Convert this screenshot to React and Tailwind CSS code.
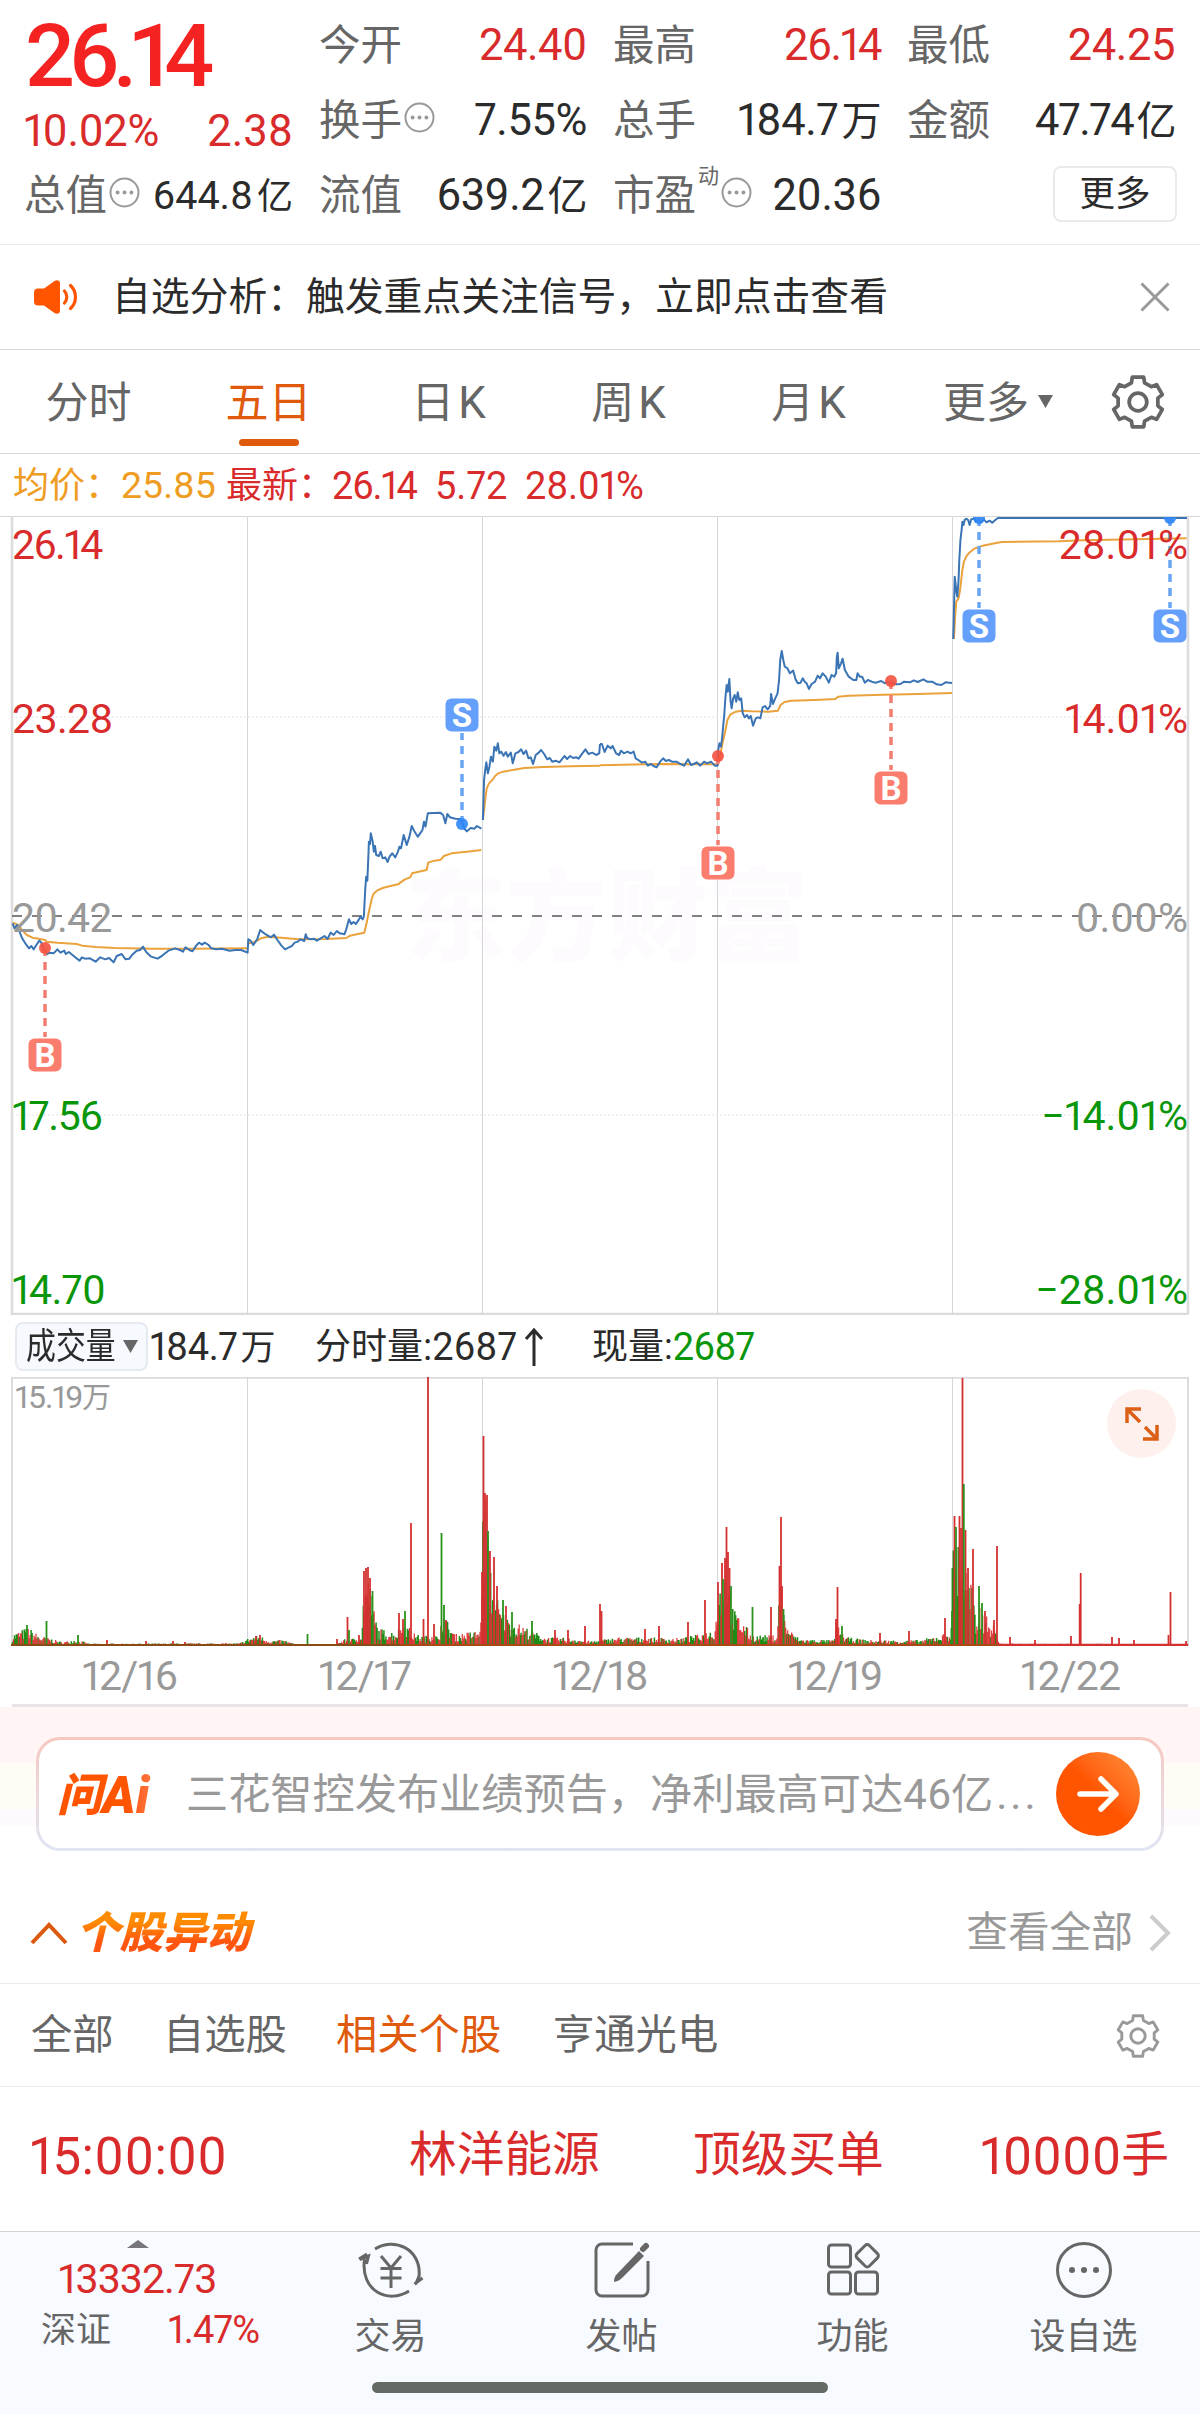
import React from 'react';

const RED = '#d92b2b';
const GREEN = '#0a960a';

// price series, in chart units (1 unit = 1/2.6133 px across, 1/3 px down)
const PRICE_LEFT = [
  '33,910 38,925 45,915 52,938 58,955 66,970 76,985 82,978 88,988 95,975 103,962 108,968 115,990 122,1003 130,998 140,1000 150,988 158,998 168,992 172,1002 180,996 195,1010 208,1022 214,1012 222,1016 235,1015 250,1025 262,1012 275,1018 285,1014 297,1027 305,1008 318,1002 328,1018 338,1016 345,1005 357,992 366,990 374,980 382,996 395,1010 412,1016 425,1006 440,992 458,985 470,990 478,995 485,982 495,990 503,994 512,978 520,968 528,974 535,968 545,975 552,985 565,988 580,986 600,992 615,990 630,990 647,998 649,958 655,962 662,975 672,958 680,930 688,938 697,945 708,952 716,944 725,960 735,976 745,988 755,982 763,978 770,968 778,965 785,958 795,963 799,943 803,955 812,958 820,956 828,962 838,955 848,948 856,957 864,938 872,945 880,933 888,940 900,943 905,928 912,898 918,912 924,906 930,912 936,902 942,890 948,898 951,888 953,840 955,800 957,770 960,782 963,700 964,665 967,672 969,640 974,665 977,695 980,678 983,705 990,708 995,695 1000,715 1007,712 1013,726 1018,710 1025,700 1033,712 1040,695 1044,680 1048,685 1055,645 1063,675 1070,650 1076,618 1082,632 1092,650 1098,640 1104,630 1108,605 1112,620 1118,580 1150,578 1158,585 1164,610 1169,582 1176,592 1190,596 1202,597 1208,608 1213,625 1220,634 1230,624 1240,626 1246,618 1258,626',
  '1262,600 1263,560 1265,480 1268,450 1271,427 1275,460 1279,440 1283,410 1288,425 1292,380 1297,392 1301,370 1305,400 1310,395 1316,407 1322,396 1327,410 1335,398 1340,430 1347,400 1355,396 1362,388 1368,402 1375,392 1381,415 1387,412 1393,432 1400,405 1408,398 1414,390 1422,402 1430,418 1437,414 1443,425 1452,422 1462,427 1475,408 1482,417 1490,408 1498,414 1506,412 1512,416 1520,403 1530,388 1538,402 1548,398 1558,405 1566,400 1568,372',
];
const PRICE_RIGHT = [
  '0,732 5,732 12,756 20,737 28,745 33,738 42,760 50,765 55,752 62,760 72,755 80,760 88,755 93,775 100,780 110,788 118,785 125,797 133,792 140,798 148,802 157,785 165,775 172,783 180,780 188,785 200,785 210,792 220,797 230,778 238,795 245,792 253,787 262,797 272,785 280,790 290,785 300,797 307,797 309,750 312,730 316,740 319,715 321,690 325,640 328,590 331,555 334,575 338,537 341,600 344,625 348,595 352,585 356,605 360,577 364,600 369,595 373,640 378,652 384,645 389,655 394,648 400,677 407,655 413,652 419,655 425,622 431,618 438,628 445,618 447,582 452,612 458,595 464,580 468,540 471,480 475,453 479,480 483,500 490,505 496,520 505,512 511,538 517,550 524,548 530,535 535,545 540,550 546,567 553,552 562,545 569,527 575,535 582,520 590,530 598,548 605,525 612,530 617,520 619,470 621,458 624,505 630,490 634,476 640,510 650,530 662,540 670,540 673,520 679,530 685,530 692,548 700,540 710,545 720,548 735,543 745,550 760,545 775,553 785,552 795,545 810,547 820,541 830,546 845,538 855,545 868,545 880,553 892,555 903,547 920,549',
  '923,417 924,380 925,330 927,230 929,250 932,280 934,290 937,240 939,180 942,120 945,90 947,65 950,75 953,60 957,56 962,60 966,75 970,58 978,55 983,65 990,58 995,68 1003,58 1010,67 1018,62 1025,68 1033,60 1040,54 1533,54',
];
const AVG_LEFT = [
  '33,908 48,915 58,930 70,945 85,953 105,957 118,960 122,965 150,968 200,972 215,977 250,981 300,984 400,986 500,986 647,985',
  '647,970 660,968 672,962 682,955 700,950 735,953 780,958 850,957 905,954 915,947 935,942 952,938 958,910 965,870 972,835 976,822 985,812 1000,804 1020,798 1040,793 1058,778 1072,772 1077,760 1100,754 1115,750 1119,728 1135,722 1152,719 1160,708 1180,700 1220,695 1258,690',
  '1262,600 1265,570 1269,530 1272,505 1278,490 1288,478 1294,468 1302,460 1315,455 1340,450 1370,444 1420,441 1490,439 1568,437',
];
const AVG_RIGHT = [
  '0,796 60,794 150,792 305,793',
  '307,797 315,760 322,720 328,690 333,660 341,643 355,635 370,632 395,634 440,635 465,632 472,615 482,606 500,602 560,600 615,597 622,590 650,587 740,584 830,582 920,579',
  '925,417 928,350 931,305 937,295 941,270 944,240 947,210 951,185 958,168 965,158 978,146 1000,137 1035,129 1050,126 1200,124 1260,121 1400,118 1533,115',
];

const MARKERS = [
  { kind: 'B', x: 45, dot: 948, box: 1055 },
  { kind: 'S', x: 462, dot: 824, box: 715 },
  { kind: 'B', x: 718, dot: 756, box: 863 },
  { kind: 'B', x: 891, dot: 681, box: 788 },
  { kind: 'S', x: 979, dot: 518, box: 626 },
  { kind: 'S', x: 1170, dot: 518, box: 626 },
];

// volume: rough level along the x axis, then single minutes that stick out
const LEVEL = [
  [12, 12], [28, 19], [40, 10], [50, 8], [62, 4], [75, 7], [90, 2.5], [240, 3], [248, 8], [258, 11], [270, 6], [285, 6],
  [295, 2], [335, 2], [345, 7], [355, 8], [362, 12], [364, 70], [370, 70], [374, 38], [378, 18], [395, 14], [405, 24],
  [415, 12], [425, 10], [434, 14], [440, 6], [441, 42], [447, 26], [455, 12], [480, 16], [482, 100], [484, 170], [487, 150],
  [489, 90], [495, 60], [500, 38], [508, 28], [530, 17], [545, 9], [575, 8], [590, 5], [620, 9], [680, 8], [700, 12],
  [715, 18], [718, 55], [726, 85], [730, 62], [733, 38], [745, 22], [752, 11], [777, 11], [779, 70], [782, 62], [785, 26],
  [792, 14], [800, 7], [834, 6], [836, 25], [840, 16], [846, 9], [870, 6], [920, 6], [940, 11], [951, 15], [953, 115],
  [962, 118], [966, 80], [973, 60], [976, 14], [979, 44], [985, 32], [996, 18], [999, 2.5], [1188, 2],
];
const SPIKES = {
  r: [
    [107, 6], [146, 5], [173, 5], [185, 4], [256, 10], [260, 11], [337, 7], [347.5, 29], [359, 11], [364, 75], [366, 78],
    [368, 79], [370, 68], [399, 33], [403, 27], [411, 123], [423.5, 27], [428, 269], [434, 22], [446, 26], [482, 74],
    [483.5, 210], [485, 153], [487, 151], [490, 95], [494, 89], [497, 60], [506, 40], [555, 16], [568, 16], [585, 20],
    [600, 42], [601.5, 35], [645, 17], [659, 20], [688, 24], [705, 46], [718, 64], [722, 83], [725, 88], [726.5, 119],
    [728, 94], [729.5, 78], [771, 39], [779.5, 80], [781, 129], [782, 60], [836, 27], [837.5, 59], [880, 13], [909, 15],
    [945, 28], [954.5, 130], [959.5, 130], [961, 118], [962.5, 268], [965.5, 116], [968, 78], [973, 97], [985, 35],
    [994, 26], [997, 100], [1010, 9], [1035, 6], [1071, 10], [1079.7, 42], [1080.7, 73], [1112, 9], [1119, 8], [1134, 6],
    [1168.5, 11], [1170.5, 54], [1186, 5],
  ],
  g: [
    [27, 21], [46.5, 25], [78, 11], [307.5, 12], [349, 16], [372.5, 55], [405, 35], [441.5, 113], [444, 41], [488, 115],
    [503, 46], [512, 34], [532, 25], [723, 67], [731, 60], [752.5, 39], [783.5, 37], [842, 20], [952, 35], [956, 119],
    [963.8, 162], [979, 60], [982, 43],
  ],
};

function levelAt(x) {
  const i = LEVEL.findIndex(([px]) => px >= x);
  if (i <= 0) return LEVEL[0][1];
  const [x0, h0] = LEVEL[i - 1];
  const [x1, h1] = LEVEL[i];
  return h0 + ((h1 - h0) * (x - x0)) / (x1 - x0);
}

function volumePaths() {
  let seed = 7;
  const rand = () => {
    seed = (seed * 16807) % 2147483647;
    return seed / 2147483647;
  };
  const out = { r: '', g: '' };
  for (let x = 12.5; x < 1188; x += 0.98) {
    const h = Math.max(1.5, levelAt(x) * (0.35 + 0.65 * rand()));
    const key = x > 998 || rand() < 0.52 ? 'r' : 'g';
    out[key] += `M${x.toFixed(1)} 269v-${h.toFixed(1)}`;
  }
  return out;
}
const VOLUME = volumePaths();

function gearPath(c, outer, inner) {
  const pts = [];
  for (let i = 0; i < 6; i++) {
    const a = i * 60 - 90;
    [[-13, outer], [13, outer], [19, inner], [41, inner]].forEach(([d, r]) => {
      const t = ((a + d) * Math.PI) / 180;
      pts.push(`${(c + r * Math.cos(t)).toFixed(2)} ${(c + r * Math.sin(t)).toFixed(2)}`);
    });
  }
  return `M${pts.join('L')}Z`;
}

function Gear({ className, stroke }) {
  return (
    <svg className={className} viewBox="0 0 52 52" fill="none" stroke="currentColor" strokeWidth={stroke} strokeLinejoin="round">
      <path d={gearPath(26, 24.5, 19.5)} />
      <circle cx="26" cy="26" r="8.5" />
    </svg>
  );
}

function Dots() {
  return (
    <svg className="w-[31px] h-[31px] shrink-0 relative -top-[3px] ml-[2px]" viewBox="0 0 31 31" fill="none" stroke="#999">
      <circle cx="15.5" cy="15.5" r="14" strokeWidth="2" />
      <path d="M8.6 15.5h.01M15.5 15.5h.01M22.4 15.5h.01" strokeWidth="4" strokeLinecap="round" />
    </svg>
  );
}

function Stat({ label, value, unit, red, tight, children }) {
  return (
    <div className="h-[75px] flex items-center justify-between whitespace-nowrap">
      <span className="flex items-center text-[41.5px] text-[#666] ml-[-1px]">{label}{children}</span>
      <span className={`text-[43.5px] ${red ? 'text-[#d92b2b]' : 'text-[#2b2b2b]'} ${tight ? 'tracking-[-1.4px]' : 'tracking-[-0.4px]'}`}>
        {value}
        {unit && <span className="text-[40px] ml-[3px]">{unit}</span>}
      </span>
    </div>
  );
}

function Header() {
  return (
    <header className="h-[245px] border-b border-[#ebebeb] pl-[26px] pr-[25px] pt-[8px] grid grid-cols-4 gap-x-[27px]">
      <div>
        <div className="h-[96px] flex items-center text-[88px] font-medium text-[#f52222] tracking-[-6.6px] ml-[-1px]">26.14</div>
        <div className="h-[54px] pt-[2px] flex items-center justify-between text-[43.5px] text-[#d92b2b] ml-[-2px]">
          <span className="tracking-[-0.4px]">10.02%</span>
          <span>2.38</span>
        </div>
        <div className="h-[75px] flex items-center justify-between whitespace-nowrap">
          <span className="flex items-center text-[41.5px] text-[#666] ml-[-2px]">总值<Dots /></span>
          <span className="text-[39.5px] text-[#2b2b2b]">644.8<span className="text-[36px] ml-[4px]">亿</span></span>
        </div>
      </div>
      <div>
        <Stat label="今开" value="24.40" red />
        <Stat label="换手" value="7.55%"><Dots /></Stat>
        <Stat label="流值" value="639.2" unit="亿" />
      </div>
      <div>
        <Stat label="最高" value="26.14" red tight />
        <Stat label="总手" value="184.7" unit="万" />
        <Stat label="市盈" value="20.36">
          <span className="text-[21px] relative -top-[19px] ml-[2px]">动</span>
          <Dots />
        </Stat>
      </div>
      <div>
        <Stat label="最低" value="24.25" red />
        <Stat label="金额" value="47.74" unit="亿" tight />
        <div className="h-[75px] flex items-center justify-end">
          <button className="w-[124px] h-[56px] border-2 border-[#eaeaec] rounded-lg text-[35.5px] text-[#2b2b2b] mt-[-3px] mr-[-2px] pt-[2px]">更多</button>
        </div>
      </div>
    </header>
  );
}

function Notice() {
  return (
    <div className="h-[105px] border-b border-[#d8d8d8] flex items-center pl-[34px] pr-[30px]">
      <svg className="w-[44px] h-[36px]" viewBox="0 0 44 36" fill="none">
        <path d="M4 9.500h6L20.500 2c2.500-1.500 5.500-.6 5.500 2v28c0 2.600-3 3.500-5.500 2L10 26.500H4c-2.600 0-4-1.400-4-4v-9c0-2.600 1.400-4 4-4z" fill="#ff5500" />
        <path d="M30.500 12c3 3.200 3 8.800 0 12M36.500 6.500c6.600 6 6.600 17 0 23" stroke="#ff5500" strokeWidth="3.200" strokeLinecap="round" />
      </svg>
      <p className="ml-[34px] text-[38.8px] text-[#2b2b2b] flex-1">自选分析：触发重点关注信号，立即点击查看</p>
      <svg className="w-[30px] h-[30px]" viewBox="0 0 30 30" stroke="#999" strokeWidth="3" fill="none">
        <path d="M1.500 1.500l27 27M28.500 1.500l-27 27" />
      </svg>
    </div>
  );
}

const TABS = ['分时', '五日', '日K', '周K', '月K'];

function PeriodTabs() {
  return (
    <nav className="h-[104px] border-b border-[#d8d8d8] flex items-stretch text-[43px] text-[#666]">
      {TABS.map((t) => (
        <div key={t} className="w-[180px] flex items-center justify-center relative pt-[3px] pr-[3px]">
          {t.endsWith('K') ? (
            <span>{t[0]}<span className="ml-[4px] text-[44px]">K</span></span>
          ) : (
            <span className={t === '五日' ? 'text-[#df5a0c]' : ''}>{t}</span>
          )}
          {t === '五日' && <i className="absolute bottom-[7px] left-[59px] w-[60px] h-[7px] rounded-full bg-[#df5a0c]" />}
        </div>
      ))}
      <div className="flex items-center pl-[43px] pt-[3px]">
        更多
        <svg className="w-[15px] h-[13px] ml-[9px] mt-[-4px]" viewBox="0 0 15 13"><path d="M0 0h15L7.500 13z" fill="#666" /></svg>
      </div>
      <Gear className="w-[54px] h-[54px] self-center ml-auto mr-[35px]" stroke={3.6} />
    </nav>
  );
}

function PriceInfo() {
  return (
    <div className="h-[63px] border-b border-[#d8d8d8] flex items-center pl-[13px] pt-[2px] text-[36px] text-[#d92b2b] whitespace-nowrap">
      <span className="w-[213px] flex items-center text-[#ee9c22]">均价：<span className="text-[37.5px]">25.85</span></span>
      <span className="w-[106px]">最新：</span>
      <span className="w-[103px] text-[38px] tracking-[-1.3px]">26.14</span>
      <span className="w-[90px] text-[38px]">5.72</span>
      <span className="text-[38px] tracking-[-0.2px]">28.01%</span>
    </div>
  );
}

const AXIS = [
  { left: '26.14', right: '28.01%', y: 544, color: RED, gap: -1.7 },
  { left: '23.28', right: '14.01%', y: 717.5, color: RED, gap: -0.6 },
  { left: '20.42', right: '0.00%', y: 916.5, color: '#999', gap: -0.9 },
  { left: '17.56', right: '−14.01%', y: 1115, color: GREEN, gap: -1.3 },
  { left: '14.70', right: '−28.01%', y: 1288.5, color: GREEN, gap: -0.7 },
];

function Lines({ data, color }) {
  return data.map((points) => (
    <polyline key={points} points={points} stroke={color} strokeWidth="2" strokeLinejoin="round" vectorEffect="non-scaling-stroke" />
  ));
}

function PriceChart() {
  return (
    <svg className="block w-full h-[798px]" viewBox="0 517 1200 798" fill="none">
      <text x="607" y="953" fontSize="101" fontWeight="900" fill="#fefbfe" textAnchor="middle">东方财富</text>
      <path d="M12 517v797M1188 517v797M10.500 1314h1178" stroke="#dcdcde" strokeWidth="2.500" />
      <path d="M247.500 517v797M482.500 517v797M717.500 517v797M952.500 517v797" stroke="#d6d6da" />
      <path d="M12 717h1176M12 1115h1176" stroke="#e4e4e6" strokeDasharray="2 2" />
      <path d="M12 916h1176" stroke="#808080" strokeWidth="2" strokeDasharray="10 10" />
      <g transform="translate(0 620) scale(.38265 .33333)">
        <Lines data={AVG_LEFT} color="#eba23c" />
        <Lines data={PRICE_LEFT} color="#3a74b4" />
      </g>
      <g transform="translate(600 500) scale(.38265 .33333)">
        <Lines data={AVG_RIGHT} color="#eba23c" />
        <Lines data={PRICE_RIGHT} color="#3a74b4" />
      </g>
      <path d="M998 518h189" stroke="#3a74b4" strokeWidth="2" />
      {MARKERS.map(({ kind, x, dot, box }) => (
        <g key={`${x}-${box}`}>
          <path
            d={`M${x} ${dot}V${box > dot ? box - 18 : box + 18}`}
            stroke={kind === 'B' ? '#f27e70' : '#6aa5f2'}
            strokeWidth="3.500"
            strokeDasharray="8 6"
          />
          <circle cx={x} cy={dot} r="6" fill={kind === 'B' ? '#f4513f' : '#2f86f6'} opacity=".9" />
          <rect x={x - 16.5} y={box - 16.5} width="33" height="33" rx="6" fill={kind === 'B' ? '#fb7d6e' : '#64a0fb'} />
          <text x={x} y={box + 11.5} fontSize="33" fontWeight="700" fill="#fff" textAnchor="middle">{kind}</text>
        </g>
      ))}
      {AXIS.map(({ left, right, y, color, gap }) => (
        <g key={left} fontSize="41" fill={color}>
          <text x="12" y={y + 15} letterSpacing={gap}>{left}</text>
          <text x="1188" y={y + 15} textAnchor="end">{right}</text>
        </g>
      ))}
    </svg>
  );
}

function VolumeInfo() {
  return (
    <div className="h-[62px] flex items-center pl-[15px] pt-[1px] text-[36px] text-[#2b2b2b] whitespace-nowrap">
      <div className="w-[133px] h-[49px] bg-[#f6faff] border-2 border-[#e6e9ef] rounded-lg flex items-center pl-[9px]">
        <span className="w-[89px]"><span className="inline-block origin-left scale-x-[.83]">成交量</span></span>
        <svg className="w-[15px] h-[13px] ml-[8px]" viewBox="0 0 15 13"><path d="M0 0h15L7.500 13z" fill="#666" /></svg>
      </div>
      <span className="w-[167px] pl-[2px] text-[38px] tracking-[-0.4px]">184.7<span className="text-[35px] ml-[3px]">万</span></span>
      <span className="flex items-center">分时量<span className="text-[38px]">:2687</span></span>
      <svg className="w-[20px] h-[40px] ml-[7px] mr-[48px]" viewBox="0 0 20 40" fill="none" stroke="#2b2b2b" strokeWidth="3">
        <path d="M10 39V3M2 12l8-9 8 9" />
      </svg>
      <span className="flex items-center">现量:<span className="text-[38px] text-[#0a960a] tracking-[-0.8px]">2687</span></span>
    </div>
  );
}

function VolumeChart() {
  return (
    <div className="relative">
      <svg className="block w-full h-[269px]" viewBox="0 0 1200 269" fill="none">
        <path d="M12 269V.75H1188V269" stroke="#dcdcde" strokeWidth="2" />
        <path d="M247.500 0v269M482.500 0v269M717.500 0v269M952.500 0v269" stroke="#d6d6da" />
        <text x="15" y="31" fontSize="32" letterSpacing="-1" fill="#999">15.19</text>
        <text x="82" y="31" fontSize="29" fill="#999">万</text>
        <path d={VOLUME.g} stroke="#1e8c14" strokeWidth="1.500" />
        <path d={VOLUME.r} stroke="#d92b2b" strokeWidth="1.300" opacity=".9" />
        {SPIKES.r.map(([x, h]) => <path key={x} d={`M${x} 269v-${h}`} stroke="#d43030" strokeWidth="1.800" />)}
        {SPIKES.g.map(([x, h]) => <path key={x} d={`M${x} 269v-${h}`} stroke="#2a921c" strokeWidth="1.800" />)}
        <path d="M11 268H400" stroke="#8a4a14" strokeWidth="2" />
        <path d="M400 268H998" stroke="#a84a18" strokeWidth="2" />
        <path d="M998 268H1188" stroke="#d43030" strokeWidth="2.500" />
      </svg>
      <button className="absolute top-[12px] right-[24px] w-[69px] h-[69px] rounded-full bg-[#fef1ed] flex items-center justify-center">
        <svg className="w-[34px] h-[34px]" viewBox="0 0 34 34" fill="none" stroke="#dc5f16" strokeWidth="3.500">
          <path d="M2 16V2h14M2 2l13 13M32 18v14H18M32 32L20 20" />
        </svg>
      </button>
    </div>
  );
}

function AskAi() {
  return (
    <div className="h-[164px] px-[36px] pt-[30px] bg-[linear-gradient(#fff5f5_0_56px,#fffbf5_56px_102px,#fdf9ff_102px_119px,#fff_119px)]">
      <div className="h-[114px] p-[3px] rounded-[24px] bg-linear-to-b from-[#f6c8c0] to-[#e0e5f4]">
        <div className="h-full bg-white rounded-[21px] flex items-center pl-[18px] pr-[21px]">
          <span className="flex items-center w-[129px] pt-[2px] text-[51px] font-black italic text-transparent bg-clip-text bg-linear-to-r from-[#ff5500] from-55% to-[#ff9a6a]">
            <span className="text-[45px]">问</span>Ai
          </span>
          <p className="flex-1 pt-[3px] text-[42.2px] text-[#999] whitespace-nowrap">
            三花智控发布业绩预告，净利最高可达46亿<span className="tracking-[3px] ml-[3px]">...</span>
          </p>
          <span className="w-[84px] h-[84px] rounded-full bg-linear-to-tr from-[#ff5500] from-50% to-[#ff9038] flex items-center justify-center">
            <svg className="w-[42px] h-[36px]" viewBox="0 0 42 36" fill="none" stroke="#fff" strokeWidth="5.500" strokeLinecap="round" strokeLinejoin="round">
              <path d="M3 18h35M24 3l15 15-15 15" />
            </svg>
          </span>
        </div>
      </div>
    </div>
  );
}

function Movers() {
  return (
    <section>
      <div className="h-[113px] pt-[11px] border-b border-[#ebebeb] flex items-center pl-[30px] pr-[29px]">
        <svg className="w-[38px] h-[24px]" viewBox="0 0 38 24" fill="none" stroke="#dc5a10" strokeWidth="4">
          <path d="M2 22L19 4l17 18" />
        </svg>
        <h2 className="ml-[8px] pr-2 pt-[2px] text-[43.5px] font-black italic text-transparent bg-clip-text bg-linear-to-b from-[#ff8c00] from-25% to-[#ff5510] to-70%">个股异动</h2>
        <span className="ml-auto pt-[1px] text-[41.7px] text-[#999]">查看全部</span>
        <svg className="w-[22px] h-[38px] ml-[16px]" viewBox="0 0 22 38" fill="none" stroke="#ccc" strokeWidth="4">
          <path d="M2 2l17 17L2 36" />
        </svg>
      </div>
      <div className="h-[103px] border-b border-[#ebebeb] flex items-center pl-[31px] pr-[40px] pt-[1px] text-[41.3px] text-[#666]">
        <span className="w-[132px]">全部</span>
        <span className="w-[173px]">自选股</span>
        <span className="w-[217px] text-[#df5a0c]">相关个股</span>
        <span>亨通光电</span>
        <Gear className="w-[44px] h-[44px] ml-auto text-[#999]" stroke={3.4} />
      </div>
      <div className="h-[144px] pb-[6px] flex items-center pl-[30px] pr-[31px] text-[47.7px] text-[#d92b2b] whitespace-nowrap">
        <span className="w-[379px] text-[51px] tracking-[0.4px]">15:00:00</span>
        <span className="w-[284px]">林洋能源</span>
        <span>顶级买单</span>
        <span className="ml-auto flex items-center"><span className="text-[51px]">10000</span>手</span>
      </div>
    </section>
  );
}

function NavItem({ label, children }) {
  return (
    <div className="w-[231px] flex flex-col items-center">
      <svg className="w-[66px] h-[66px] mt-[5px]" viewBox="0 0 66 66" fill="none" stroke="#666" strokeWidth="3">{children}</svg>
      <span className="mt-[16px] text-[36px]">{label}</span>
    </div>
  );
}

function BottomBar() {
  return (
    <footer className="h-[184px] bg-[#f7faff] border-t border-[#d4d4d6] text-[#666]">
      <div className="flex h-[150px]">
        <div className="w-[275px] flex flex-col items-center whitespace-nowrap">
          <svg className="w-[22px] h-[8px] mt-[8px]" viewBox="0 0 22 8"><path d="M11 0l11 8H0z" fill="#77777b" /></svg>
          <span className="h-[62px] flex items-center text-[41px] text-[#d92b2b] tracking-[-0.9px]">13332.73</span>
          <div className="h-[40px] flex items-center self-stretch pl-[41px]">
            <span className="w-[127px] text-[35px]">深证</span>
            <span className="text-[38px] text-[#d92b2b] tracking-[-0.8px]">1.47%</span>
          </div>
        </div>
        <NavItem label="交易">
          <path d="M17 12C35 0 64 11 61 40M51 54C31 67 2 55 6.500 22M1 22l8-5M1.500 22.500l9-3.500-2 8M56.500 47l8-6M61.500 38l-4 9.500" />
          <path d="M23 19l10 12 10-12M33 31v20M22.500 31.500h21M22.500 41h21" />
        </NavItem>
        <NavItem label="发帖">
          <path d="M44 7H13a6 6 0 0 0-6 6v40a6 6 0 0 0 6 6h40a6 6 0 0 0 6-6V24" />
          <path d="M25 45c0-4 1-6 3-8l22-23 5 5-22 22c-2 2-4 3-8 4z" fill="#666" stroke="none" />
          <path d="M54 12l3-3" strokeWidth="6" strokeLinecap="round" />
        </NavItem>
        <NavItem label="功能">
          <rect x="8.500" y="8" width="22" height="22" rx="3" />
          <rect x="8.500" y="35" width="22" height="22" rx="3" />
          <rect x="35.500" y="35" width="22" height="22" rx="3" />
          <rect x="38.500" y="10" width="17.500" height="17.500" rx="3" transform="rotate(45 47.250 18.750)" />
        </NavItem>
        <NavItem label="设自选">
          <circle cx="33" cy="33" r="26.500" />
          <path d="M21 33h.01M33 33h.01M45 33h.01" strokeWidth="6" strokeLinecap="round" />
        </NavItem>
      </div>
      <div className="w-[456px] h-[11px] mx-auto rounded-full bg-[#646a64]" />
    </footer>
  );
}

export default function App() {
  return (
    <div className="w-[1200px] h-[2414px] overflow-hidden bg-white leading-none font-[Roboto,'Noto_Sans_CJK_SC',sans-serif] proportional-nums">
      <Header />
      <Notice />
      <PeriodTabs />
      <PriceInfo />
      <PriceChart />
      <VolumeInfo />
      <VolumeChart />
      <div className="h-[61px] mx-[12px] pt-[2px] border-b-[3px] border-[#e9e5e7] flex items-center text-[41px] text-[#999] tracking-[-0.8px]">
        {['12/16', '12/17', '12/18', '12/19', '12/22'].map((d) => (
          <span key={d} className="flex-1 text-center">{d}</span>
        ))}
      </div>
      <AskAi />
      <Movers />
      <BottomBar />
    </div>
  );
}
